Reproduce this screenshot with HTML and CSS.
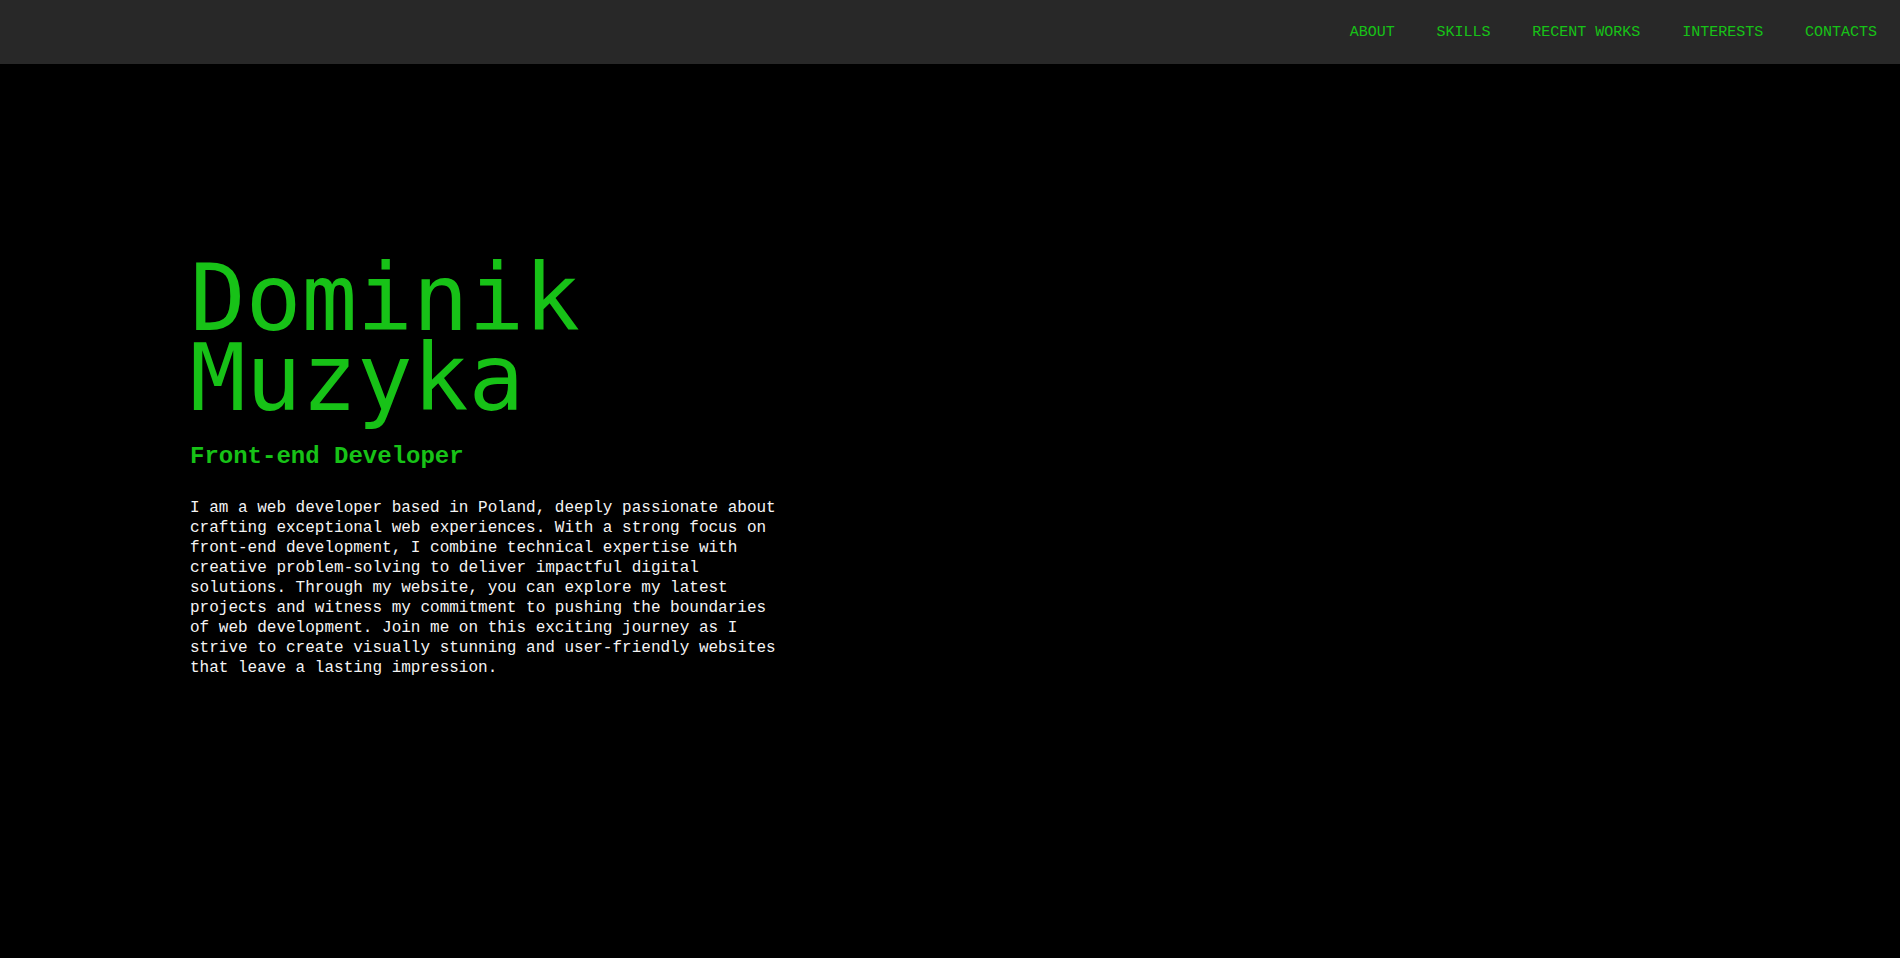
FILE: index.html
```html
<!DOCTYPE html>
<html lang="en">
<head>
<meta charset="utf-8">
<title>Dominik Muzyka</title>
<link rel="stylesheet" href="styles.css">
</head>
<body>
<header class="topbar">
  <nav class="nav">
    <a class="nav-link" href="#about">ABOUT</a>
    <a class="nav-link" href="#skills">SKILLS</a>
    <a class="nav-link" href="#works">RECENT WORKS</a>
    <a class="nav-link" href="#interests">INTERESTS</a>
    <a class="nav-link" href="#contacts">CONTACTS</a>
  </nav>
</header>
<main class="hero">
  <div class="intro">
    <h1 class="name">Dominik<br>Muzyka</h1>
    <h2 class="role">Front-end Developer</h2>
    <p class="bio">I am a web developer based in Poland, deeply passionate about crafting exceptional web experiences. With a strong focus on front-end development, I combine technical expertise with creative problem-solving to deliver impactful digital solutions. Through my website, you can explore my latest projects and witness my commitment to pushing the boundaries of web development. Join me on this exciting journey as I strive to create visually stunning and user-friendly websites that leave a lasting impression.</p>
  </div>
</main>
</body>
</html>
```

FILE: styles.css
```css
* { box-sizing: border-box; }
html, body {
  margin: 0;
  padding: 0;
  background: #000;
  height: 100%;
}
body {
  font-family: "Liberation Mono", "DejaVu Sans Mono", monospace;
  color: #17c217;
  overflow: hidden;
}
.topbar {
  height: 64px;
  background: #282828;
  display: flex;
  justify-content: flex-end;
  align-items: center;
  padding-right: 23px;
  padding-top: 2px;
}
.nav {
  display: flex;
  align-items: center;
  gap: 41.8px;
}
.nav-link {
  color: #17c217;
  text-decoration: none;
  font-size: 15px;
  line-height: 18px;
}
.hero {
  height: calc(100% - 64px);
  padding: 194.2px 0 0 190px;
}
.intro {
  width: 590px;
}
.name {
  margin: 0;
  font-family: "DejaVu Sans Mono", "Liberation Mono", monospace;
  font-size: 92.5px;
  font-weight: normal;
  line-height: 80px;
  color: #17c217;
}
.role {
  margin: 24.8px 0 0;
  font-size: 24px;
  line-height: 28px;
  font-weight: bold;
  color: #17c217;
}
.bio {
  margin: 27px 0 0;
  font-size: 16px;
  line-height: 20px;
  color: #f4f4f4;
}
```
